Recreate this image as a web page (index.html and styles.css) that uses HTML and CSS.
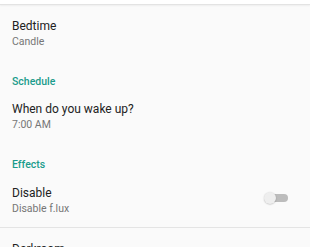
FILE: index.html
```html
<!DOCTYPE html>
<html>
<head>
<meta charset="utf-8">
<link rel="stylesheet" href="styles.css">
</head>
<body>
<div class="topbar"></div>
<div class="list">
  <div class="item">
    <div class="text">
      <div class="title">Bedtime</div>
      <div class="summary">Candle</div>
    </div>
  </div>
  <div class="category">Schedule</div>
  <div class="item">
    <div class="text">
      <div class="title">When do you wake up?</div>
      <div class="summary">7:00 AM</div>
    </div>
  </div>
  <div class="category">Effects</div>
  <div class="item">
    <div class="text">
      <div class="title">Disable</div>
      <div class="summary">Disable f.lux</div>
    </div>
    <div class="switch"><span class="track"></span><span class="thumb"></span></div>
  </div>
  <div class="divider"></div>
  <div class="item">
    <div class="text">
      <div class="title">Darkroom</div>
      <div class="summary">Invert colors</div>
    </div>
  </div>
</div>
</body>
</html>
```

FILE: styles.css
```css
html, body {
  margin: 0;
  padding: 0;
  background: #fafafa;
  font-family: Roboto, "Noto Sans", sans-serif;
  overflow: hidden;
}
.topbar {
  height: 4px;
  background: #ffffff;
  border-bottom: 1px solid #e3e3e3;
  box-shadow: 0 1px 2px rgba(0,0,0,0.05);
}
.list {
  display: flex;
  flex-direction: column;
}
.item {
  display: flex;
  align-items: center;
  padding: 13.5px 12px 10.5px 12px;
}
.text {
  flex: 1;
  display: flex;
  flex-direction: column;
}
.title {
  font-size: 12px;
  line-height: 15px;
  color: #222222;
}
.summary {
  font-size: 10.5px;
  line-height: 16px;
  color: #767676;
}
.category {
  padding: 13.5px 12px 0 12px;
  font-size: 10.5px;
  line-height: 15px;
  font-weight: 500;
  color: #1a9c8c;
}
.divider {
  height: 1px;
  background: #e4e4e4;
}
.switch {
  position: relative;
  width: 24px;
  height: 12px;
  margin-right: 10px;
  margin-bottom: 6px;
}
.track {
  position: absolute;
  left: 2px;
  right: 0;
  top: 2px;
  height: 8px;
  border-radius: 4px;
  background: #bcbcbc;
}
.thumb {
  position: absolute;
  left: 0;
  top: 0;
  width: 12px;
  height: 12px;
  border-radius: 50%;
  background: #eeeeee;
  box-shadow: 0 0.5px 1.5px rgba(0,0,0,0.25);
}
```
